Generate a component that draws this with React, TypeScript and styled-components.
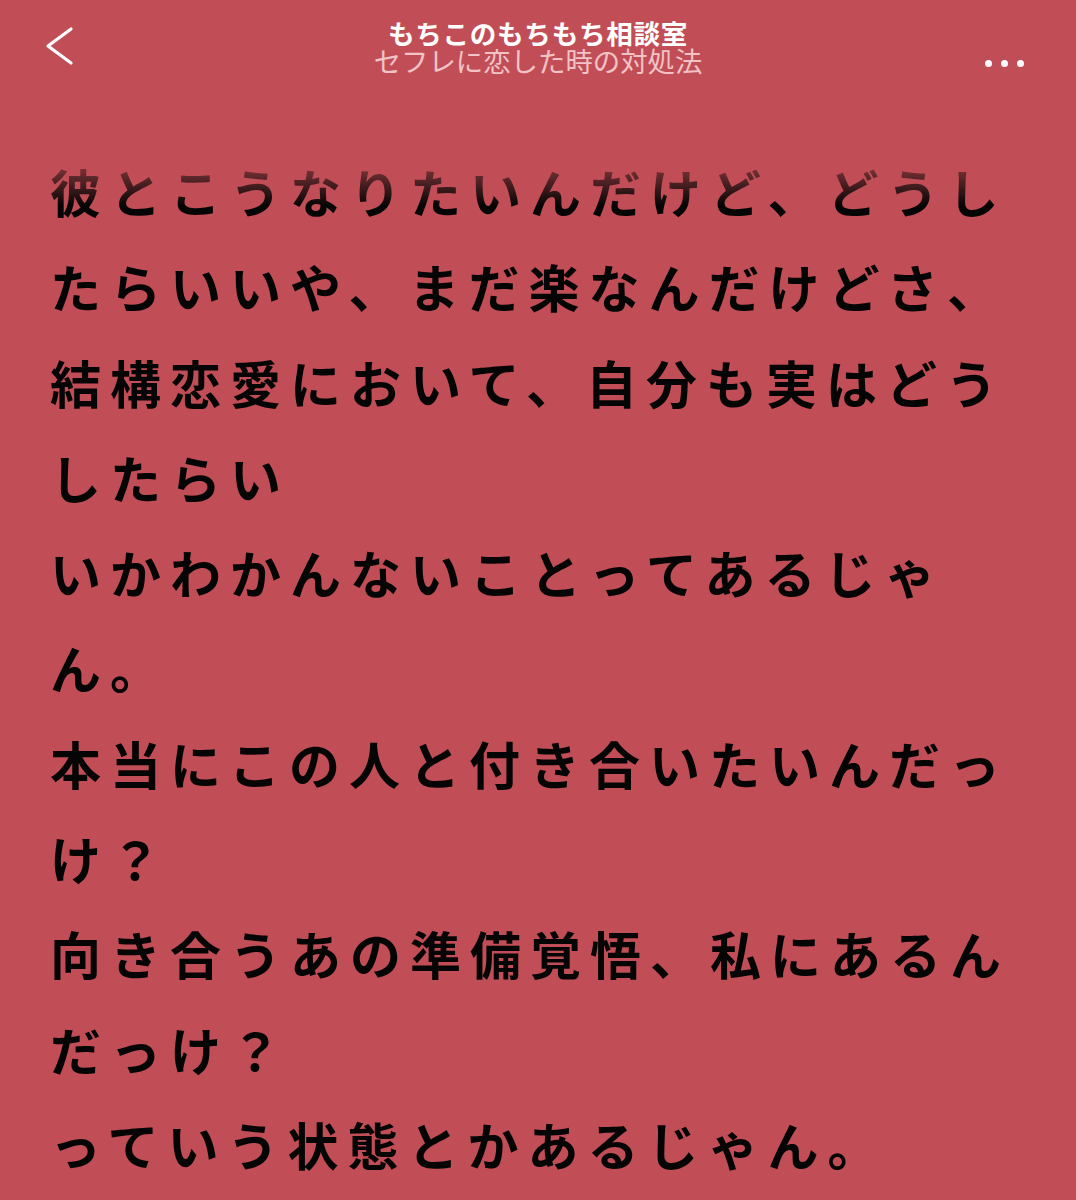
import React from "react";
import styled, { createGlobalStyle } from "styled-components";

const BG = "#c14e56";

const Global = createGlobalStyle`
  html, body { margin: 0; padding: 0; background: ${BG}; }
  body { font-family: "Noto Sans CJK JP", "Noto Sans", sans-serif; }
`;

const Page = styled.div`
  width: 1076px;
  min-height: 1200px;
  background: ${BG};
  overflow: hidden;
`;

const Header = styled.header`
  display: grid;
  grid-template-columns: 120px 1fr 120px;
  align-items: start;
  height: 120px;
`;

const BackButton = styled.div`
  padding: 26px 0 0 44px;
  display: flex;
`;

const TitleBlock = styled.div`
  display: flex;
  flex-direction: column;
  align-items: center;
  gap: 2px;
  padding-top: 20px;
`;

const Title = styled.div`
  color: #ffffff;
  font-weight: 700;
  font-size: 26.6px;
  line-height: 25px;
  letter-spacing: 0.7px;
`;

const Subtitle = styled.div`
  color: #f1c3c7;
  font-weight: 400;
  font-size: 27.4px;
  line-height: 26px;
`;

const MoreButton = styled.div`
  display: flex;
  justify-content: flex-start;
  gap: 9px;
  padding: 60px 0 0 29px;
`;

const Dot = styled.span`
  width: 7px;
  height: 7px;
  border-radius: 50%;
  background: #ffffff;
`;

const Body = styled.main`
  position: relative;
  padding: 24px 0 0 50px;
`;

const Fade = styled.div`
  position: absolute;
  left: 0;
  right: 0;
  top: 40px;
  height: 46px;
  background: linear-gradient(to bottom, rgba(193, 78, 86, 0.75), rgba(193, 78, 86, 0));
  pointer-events: none;
`;

const Line = styled.div`
  color: #050505;
  font-weight: 700;
  font-size: 51px;
  line-height: 95.3px;
  letter-spacing: 9px;
  white-space: nowrap;
`;

const lines = [
  "彼とこうなりたいんだけど、どうし",
  "たらいいや、まだ楽なんだけどさ、",
  "結構恋愛において、自分も実はどう",
  "したらい",
  "いかわかんないことってあるじゃ",
  "ん。",
  "本当にこの人と付き合いたいんだっ",
  "け？",
  "向き合うあの準備覚悟、私にあるん",
  "だっけ？",
  "っていう状態とかあるじゃん。",
];

export default function App() {
  return (
    <Page>
      <Global />
      <Header>
        <BackButton>
          <svg width="30" height="40" viewBox="0 0 30 40">
            <path d="M27 3 L4 20 L27 37" fill="none" stroke="#fff" strokeWidth="3.2" strokeLinecap="round" strokeLinejoin="round" />
          </svg>
        </BackButton>
        <TitleBlock>
          <Title>もちこのもちもち相談室</Title>
          <Subtitle>セフレに恋した時の対処法</Subtitle>
        </TitleBlock>
        <MoreButton>
          <Dot />
          <Dot />
          <Dot />
        </MoreButton>
      </Header>
      <Body>
        {lines.map((l, i) => (
          <Line key={i}>{l}</Line>
        ))}
        <Fade />
      </Body>
    </Page>
  );
}
